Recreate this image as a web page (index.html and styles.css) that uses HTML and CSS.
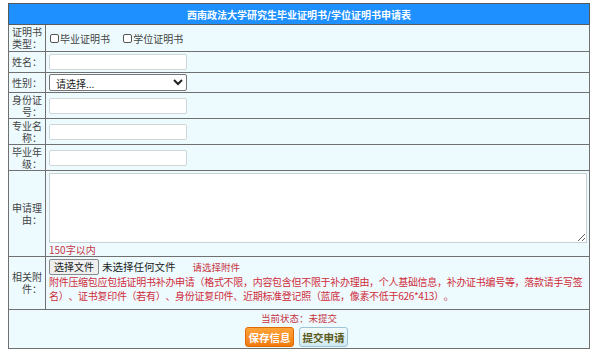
FILE: index.html
```html
<!DOCTYPE html>
<html lang="zh-CN">
<head>
  <meta charset="UTF-8" />
  <meta name="viewport" content="width=device-width, initial-scale=1.0" />
  <title>西南政法大学研究生毕业证明书/学位证明书申请表</title>
  <link rel="stylesheet" href="styles.css">
</head>
<body>
  <table class="apply-form">
    <colgroup>
      <col class="col-label">
      <col>
    </colgroup>
    <tr class="row-title">
      <th colspan="2">西南政法大学研究生毕业证明书/学位证明书申请表</th>
    </tr>
    <tr class="row-type">
      <td class="label">证明书类型：</td>
      <td class="field">
        <label class="check"><input type="checkbox">毕业证明书</label>
        <label class="check"><input type="checkbox">学位证明书</label>
      </td>
    </tr>
    <tr class="row-name">
      <td class="label">姓名：</td>
      <td class="field"><input type="text" class="text-input"></td>
    </tr>
    <tr class="row-gender">
      <td class="label">性别：</td>
      <td class="field">
        <select class="select-input">
          <option>请选择...</option>
          <option>男</option>
          <option>女</option>
        </select>
      </td>
    </tr>
    <tr class="row-two">
      <td class="label">身份证号：</td>
      <td class="field"><input type="text" class="text-input"></td>
    </tr>
    <tr class="row-two">
      <td class="label">专业名称：</td>
      <td class="field"><input type="text" class="text-input"></td>
    </tr>
    <tr class="row-two">
      <td class="label">毕业年级：</td>
      <td class="field"><input type="text" class="text-input"></td>
    </tr>
    <tr class="row-reason">
      <td class="label">申请理由：</td>
      <td class="field field-top">
        <textarea class="reason-input"></textarea>
        <div class="hint">150字以内</div>
      </td>
    </tr>
    <tr class="row-attach">
      <td class="label">相关附件：</td>
      <td class="field field-top">
        <div class="file-line">
          <button type="button" class="file-btn">选择文件</button>
          <span class="file-name">未选择任何文件</span>
          <span class="file-tip">请选择附件</span>
        </div>
        <p class="attach-note">附件压缩包应包括证明书补办申请（格式不限，内容包含但不限于补办理由，个人基础信息，补办证书编号等，落款请手写签名）、证书复印件（若有）、身份证复印件、近期标准登记照（蓝底，像素不低于626*413）。</p>
      </td>
    </tr>
    <tr class="row-foot">
      <td colspan="2" class="foot">
        <div class="status">当前状态：未提交</div>
        <div class="actions">
          <button type="button" class="btn btn-save">保存信息</button>
          <button type="button" class="btn btn-submit">提交申请</button>
        </div>
      </td>
    </tr>
  </table>
</body>
</html>
```

FILE: styles.css
```css
body {
  margin: 3px 8px;
  background-color: #ffffff;
  font-family: "Noto Sans CJK SC", "Noto Sans", sans-serif;
  font-size: 10px;
  color: #333;
}
.apply-form {
  width: 582px;
  border-collapse: collapse;
  table-layout: fixed;
  background-color: #edfbff;
  border: 1px solid #5a5a5a;
}
.col-label {
  width: 37px;
}
.apply-form th,
.apply-form td {
  border: 1px solid #707070;
  padding: 0;
}
.row-title th {
  height: 20px;
  background-color: #1e90ff;
  color: #ffffff;
  font-size: 10px;
  font-weight: bold;
  text-align: center;
  border-color: #5a5a5a;
}
.row-type { height: 27px; }
.row-name { height: 21px; }
.row-gender { height: 20px; }
.row-two { height: 26px; }
.row-reason { height: 86px; }
.row-attach { height: 53px; }
.row-foot { height: 39px; }

.label {
  text-align: right;
  padding: 0 3px !important;
  line-height: 12px;
  color: #444;
  font-size: 10px;
  vertical-align: middle;
}
.field {
  padding: 0 2px 0 3px !important;
  vertical-align: middle;
}
.field-top {
  vertical-align: top;
  padding-top: 1px !important;
}
.check {
  display: inline-flex;
  align-items: center;
  margin-right: 10px;
  color: #444;
}
.check input {
  appearance: none;
  width: 9px;
  height: 9px;
  margin: 0 1px 0 1px;
  border: 1px solid #555;
  border-radius: 2px;
  background: #fff;
}
.text-input {
  display: block;
  box-sizing: border-box;
  width: 138px;
  height: 16px;
  margin: 0;
  padding: 0 3px;
  border: 1px solid #cfd6d8;
  border-radius: 2px;
  background: #ffffff;
  font-size: 10px;
}
.select-input {
  display: block;
  box-sizing: border-box;
  width: 138px;
  height: 17px;
  margin: 0;
  padding: 0 2px;
  border: 1px solid #767676;
  border-radius: 2px;
  background: #ffffff;
  color: #222;
  font-family: "Noto Sans CJK SC", sans-serif;
  font-size: 10px;
}
.reason-input {
  display: block;
  box-sizing: border-box;
  width: 538px;
  height: 70px;
  margin: 1px 0 0;
  border: 1px solid #c8d0d2;
  background: #ffffff;
  font-size: 10px;
}
.hint {
  color: #c8353f;
  font-size: 10px;
  line-height: 13px;
}
.file-line {
  display: flex;
  align-items: center;
  height: 17px;
}
.file-btn {
  height: 16px;
  padding: 0 4px;
  border: 1px solid #8a8a8a;
  border-radius: 2px;
  background: #efefef;
  color: #222;
  font-family: "Noto Sans CJK SC", sans-serif;
  font-size: 10px;
  line-height: 14px;
}
.file-name {
  margin-left: 3px;
  color: #222;
  font-size: 10.5px;
}
.file-tip {
  margin-left: 17px;
  color: #c8353f;
  font-size: 9.5px;
}
.attach-note {
  margin: 0;
  color: #d02c3a;
  font-size: 10px;
  letter-spacing: -0.3px;
  text-spacing-trim: space-all;
  line-height: 14px;
}
.foot {
  text-align: center;
  vertical-align: top;
  padding-top: 2px !important;
}
.status {
  color: #c8353f;
  font-size: 9.5px;
  line-height: 13px;
}
.actions {
  display: flex;
  justify-content: center;
  gap: 5px;
  margin-top: 2px;
  padding-right: 5px;
}
.btn {
  width: 49px;
  height: 20px;
  padding: 0;
  border-radius: 3px;
  font-family: "Noto Sans CJK SC", sans-serif;
  font-size: 10.5px;
  font-weight: bold;
  cursor: pointer;
}
.btn-save {
  border: 1px solid #e06a00;
  background: linear-gradient(#ffa43a, #f07a10);
  color: #ffffff;
}
.btn-submit {
  border: 1px solid #9cc4d6;
  background: linear-gradient(#f2fbfd, #cfe9ef);
  color: #5c5a1a;
}
```
